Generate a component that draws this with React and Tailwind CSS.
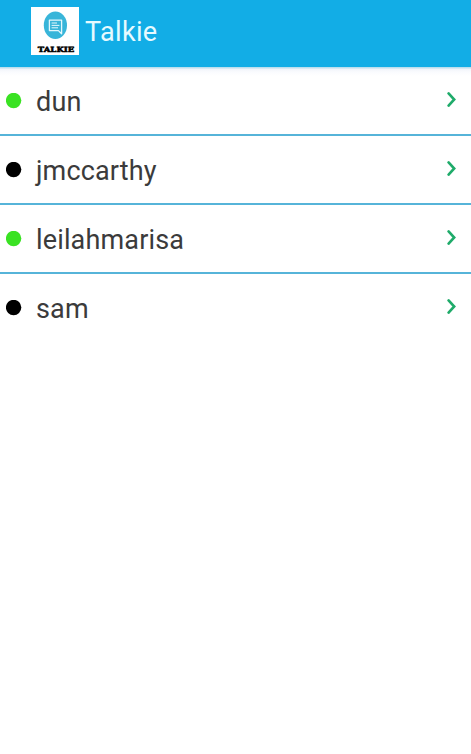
const contacts = [
  { name: 'dun', online: true },
  { name: 'jmccarthy', online: false },
  { name: 'leilahmarisa', online: true },
  { name: 'sam', online: false },
];

function Logo() {
  return (
    <svg width="48" height="48" viewBox="0 0 48 48" className="shrink-0">
      <rect width="48" height="48" fill="#fff" />
      <ellipse cx="24.4" cy="18.3" rx="11.6" ry="13.8" fill="#38b5d9" />
      {/* speech bubble */}
      <path
        d="M18.4 13.2h12.2v13.6l-3.2-3.2h-9z"
        fill="none"
        stroke="#e4f8fd"
        strokeWidth="1.3"
        strokeLinejoin="round"
      />
      <path d="M20.6 16h5.4M20.6 18.4h7.8M20.6 20.8h6.4" stroke="#e4f8fd" strokeWidth="1" />
      <text
        x="6.8"
        y="45.4"
        textLength="36.6"
        lengthAdjust="spacingAndGlyphs"
        fontFamily="'DejaVu Serif', serif"
        fontWeight="700"
        fontSize="7.2"
        fill="#000"
        stroke="#000"
        strokeWidth="0.5"
      >
        TALKIE
      </text>
    </svg>
  );
}

function ContactRow({ name, online }) {
  return (
    <li className="flex items-center h-[69px] pl-[5.5px] pr-[15px] border-b-2 border-[#56b4d9] last:border-transparent">
      <svg width="16" height="16" viewBox="0 0 16 16" className="shrink-0">
        <circle cx="7.6" cy="7.5" r="7.7" className={online ? 'fill-[#3ae223]' : 'fill-black'} />
      </svg>
      <span className="flex-1 pl-[14.5px] pt-[2px] text-[27px] leading-8 tracking-[0.15px] text-[#3b3b3b]">{name}</span>
      <svg width="9" height="15" viewBox="0 0 9 15" fill="none" stroke="#1fab6a" strokeWidth="2.6" className="mb-[2px]">
        <path d="M1.6 1.4L7.2 7.5L1.6 13.6" strokeLinecap="round" />
      </svg>
    </li>
  );
}

export default function App() {
  return (
    <div className="min-h-screen bg-white font-['Roboto',sans-serif]">
      <header className="flex items-start h-[67px] pl-[31px] pt-[7px] bg-[#12ade6]">
        <Logo />
        <h1 className="pl-[6px] pt-[9px] text-[27px] leading-8 tracking-[0.35px] text-[#e6faff]">Talkie</h1>
      </header>
      <ul className="bg-[linear-gradient(#bcdfee_0px,#bcdfee_1px,#f1f4fa_2px,#fafbfe_5px,#fff_9px)]">
        {contacts.map((contact) => (
          <ContactRow key={contact.name} {...contact} />
        ))}
      </ul>
    </div>
  );
}
